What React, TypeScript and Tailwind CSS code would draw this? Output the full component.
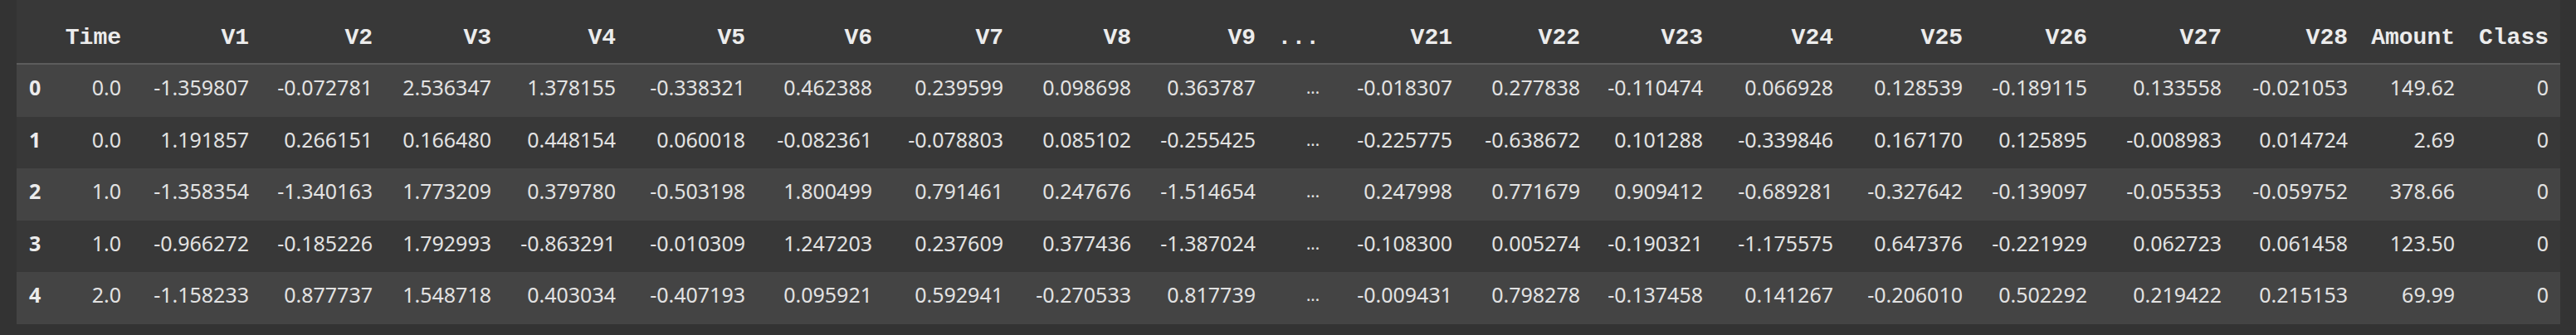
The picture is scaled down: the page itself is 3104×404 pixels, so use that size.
import React from 'react';

const gridCols =
  'grid grid-cols-[60px_80px_154px_149px_143px_150px_156px_153px_158px_154px_150px_77px_160px_154px_148px_157px_156px_150px_162px_152px_129px_113px]';

const headers = [
  'Time', 'V1', 'V2', 'V3', 'V4', 'V5', 'V6', 'V7', 'V8', 'V9', '...',
  'V21', 'V22', 'V23', 'V24', 'V25', 'V26', 'V27', 'V28', 'Amount', 'Class',
];

const rows: string[][] = [
  ['0.0', '-1.359807', '-0.072781', '2.536347', '1.378155', '-0.338321', '0.462388', '0.239599', '0.098698', '0.363787', '...', '-0.018307', '0.277838', '-0.110474', '0.066928', '0.128539', '-0.189115', '0.133558', '-0.021053', '149.62', '0'],
  ['0.0', '1.191857', '0.266151', '0.166480', '0.448154', '0.060018', '-0.082361', '-0.078803', '0.085102', '-0.255425', '...', '-0.225775', '-0.638672', '0.101288', '-0.339846', '0.167170', '0.125895', '-0.008983', '0.014724', '2.69', '0'],
  ['1.0', '-1.358354', '-1.340163', '1.773209', '0.379780', '-0.503198', '1.800499', '0.791461', '0.247676', '-1.514654', '...', '0.247998', '0.771679', '0.909412', '-0.689281', '-0.327642', '-0.139097', '-0.055353', '-0.059752', '378.66', '0'],
  ['1.0', '-0.966272', '-0.185226', '1.792993', '-0.863291', '-0.010309', '1.247203', '0.237609', '0.377436', '-1.387024', '...', '-0.108300', '0.005274', '-0.190321', '-1.175575', '0.647376', '-0.221929', '0.062723', '0.061458', '123.50', '0'],
  ['2.0', '-1.158233', '0.877737', '1.548718', '0.403034', '-0.407193', '0.095921', '0.592941', '-0.270533', '0.817739', '...', '-0.009431', '0.798278', '-0.137458', '0.141267', '-0.206010', '0.502292', '0.219422', '0.215153', '69.99', '0'],
];

function HeaderRow() {
  return (
    <div className={`${gridCols} h-[78px] border-b-2 border-[#5c5c5c]`}>
      <div />
      {headers.map((h) => (
        <div
          key={h}
          className="flex items-end justify-end pr-[14px] pb-[16px] font-['Liberation_Mono',monospace] text-[28px] leading-[28px] font-bold text-[#ececec]"
        >
          {h}
        </div>
      ))}
    </div>
  );
}

function DataRow({ index, values }: { index: number; values: string[] }) {
  const striped = index % 2 === 0;
  return (
    <div className={`${gridCols} h-[62.6px] ${striped ? 'bg-[#444444]' : 'bg-[#383838]'}`}>
      <div className="pl-[15px] pt-[15px] text-[25px] leading-[25px] font-bold text-[#ececec]">
        {index}
      </div>
      {values.map((v, i) => (
        <div key={i} className="flex justify-end pr-[14px] pt-[15px] text-[25px] leading-[25px] text-[#e2e2e2]">
          {v === '...' ? <span className="text-[20px]">...</span> : v}
        </div>
      ))}
    </div>
  );
}

export default function App() {
  return (
    <div className="w-[3104px] h-[404px] bg-[#333333] pl-[20px] font-['Noto_Sans',sans-serif]">
      <div className="w-[3065px] bg-[#383838]">
        <HeaderRow />
        {rows.map((r, i) => (
          <DataRow key={i} index={i} values={r} />
        ))}
      </div>
    </div>
  );
}
